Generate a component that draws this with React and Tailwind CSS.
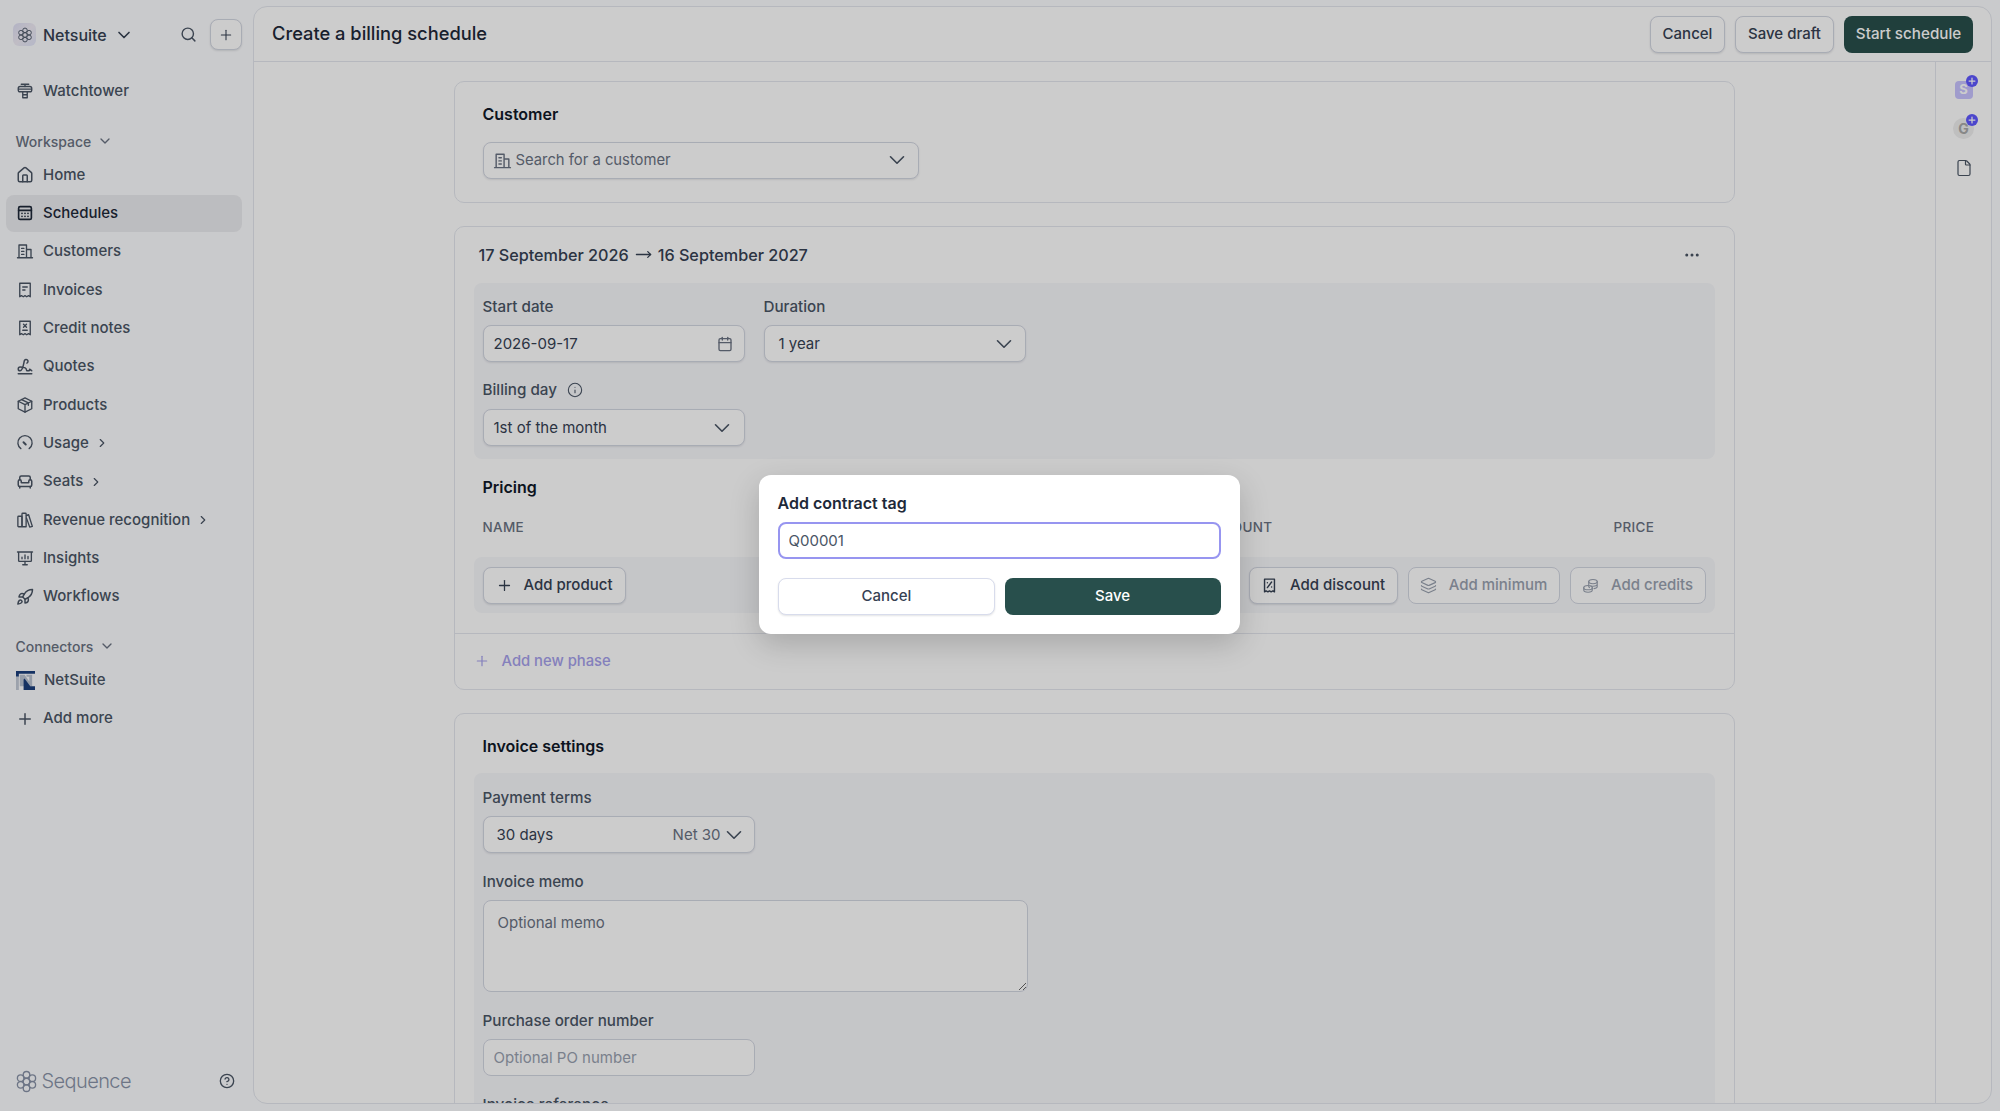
import {
  Armchair, Calendar, ChevronDown, ChevronRight, CircleHelp, Ellipsis, File, Info, Layers,
  MoveRight, Plus, Rocket, Search, Signature, House,
} from 'lucide-react'

const Svg = ({ className = 'size-[18px]', sw = 1.8, children }) => (
  <svg viewBox="0 0 24 24" fill="none" stroke="currentColor" strokeWidth={sw} strokeLinecap="round" strokeLinejoin="round" className={className}>
    {children}
  </svg>
)

const WatchtowerIcon = (p) => (
  <Svg {...p}>
    <path d="M7 3h10M12 3v3" />
    <rect x="3" y="6" width="18" height="7" rx="2.5" />
    <path d="M3.5 9.5h17" />
    <path d="M9 13v8h6v-8M9 17h6" />
  </Svg>
)
const ScheduleIcon = (p) => (
  <Svg sw={2.2} {...p}>
    <rect x="3.5" y="3.5" width="17" height="17" rx="2" />
    <path d="M3.5 8.5h17" />
    <path d="M8 12.5h.01M12 12.5h.01M16 12.5h.01M8 16.5h.01M12 16.5h.01M16 16.5h.01" />
  </Svg>
)
const BuildingIcon = (p) => (
  <Svg {...p}>
    <path d="M2 21h20M4 21V4h10v17M14 10h6v11" />
    <path d="M7.5 8.5h3M7.5 12.5h3M7.5 16.5h3" />
  </Svg>
)
const InvoiceIcon = (p) => (
  <Svg {...p}>
    <path d="M5 3h14v18l-2.3-1.4L14.3 21 12 19.6 9.7 21l-2.4-1.4L5 21z" />
    <path d="M9 8h6M9 12h3" />
  </Svg>
)
const CreditIcon = (p) => (
  <Svg {...p}>
    <path d="M5 3h14v18l-2.3-1.4L14.3 21 12 19.6 9.7 21l-2.4-1.4L5 21z" />
    <path d="m10 7 4 4M14 7l-4 4M9 15h6" />
  </Svg>
)
const DiscountIcon = (p) => (
  <Svg sw={2} {...p}>
    <path d="M5 3h14v18l-2.3-1.4L14.3 21 12 19.6 9.7 21l-2.4-1.4L5 21z" />
    <path d="m15 7-6 8M9 8h.01M15 14h.01" />
  </Svg>
)
const BoxIcon = (p) => (
  <Svg {...p}>
    <path d="M12 2.5 21 7v10l-9 4.5L3 17V7z" />
    <path d="m3 7 9 4.5L21 7M12 11.5v10M7.5 4.7l9 4.6v3" />
  </Svg>
)
const GaugeIcon = (p) => (
  <Svg {...p}>
    <path d="M6.5 19.5a9.5 9.5 0 1 1 11 0" />
    <path d="m10 11 3 3" strokeWidth={2.6} />
  </Svg>
)
const LibraryIcon = (p) => (
  <Svg {...p}>
    <rect x="2.5" y="7" width="5.5" height="14" rx="1" />
    <path d="M8 21V4a1 1 0 0 1 1-1h3.5a1 1 0 0 1 1 1v17z" />
    <path d="m14 6 2.8-1 5 15.5-3.5 1-4.3-12" />
  </Svg>
)
const InsightIcon = (p) => (
  <Svg {...p}>
    <path d="M2 4h20M3.5 4v11.5a1 1 0 0 0 1 1h15a1 1 0 0 0 1-1V4" />
    <path d="M8 13v-2M12 13V8M16 13v-3M12 16.5V20M9 21h6" />
  </Svg>
)
const CoinsIcon = (p) => (
  <Svg {...p}>
    <ellipse cx="15.5" cy="6.5" rx="6" ry="3" />
    <path d="M9.5 6.5v7c0 .6.5 1 1 1.4M21.5 6.5v7c0 1.3-1.9 2.5-4.5 2.9M21.5 10c0 1.7-2.7 3-6 3-1 0-2-.1-3-.4" />
    <ellipse cx="8.5" cy="15" rx="6" ry="3" />
    <path d="M2.5 15v3.5c0 1.7 2.7 3 6 3s6-1.3 6-3V15" />
  </Svg>
)
const Flower = ({ className }) => (
  <svg viewBox="0 0 24 24" fill="none" stroke="currentColor" strokeWidth="1.4" className={className}>
    <circle cx="12" cy="12" r="3.4" />
    <circle cx="12" cy="5" r="3.4" />
    <circle cx="12" cy="19" r="3.4" />
    <circle cx="5.9" cy="8.5" r="3.4" />
    <circle cx="18.1" cy="8.5" r="3.4" />
    <circle cx="5.9" cy="15.5" r="3.4" />
    <circle cx="18.1" cy="15.5" r="3.4" />
  </svg>
)
const NetSuiteLogo = () => (
  <svg viewBox="0 0 20 20" className="size-[19px]">
    <path d="M0 0h20v3H3v3H0z" fill="#1b3f7c" />
    <path d="M0 6h3v14H0z" fill="#c3cbd8" />
    <path d="M4 4h5l5 7V6h-3V4h6v12h-4L9 9v7H4z" fill="#b9c3d2" />
    <path d="M9 8l6 8h5v4H8V9z" fill="#1b3f7c" />
  </svg>
)

const NavItem = ({ icon: Icon, label, active, arrow }) => (
  <div className={`flex items-center h-[37px] rounded-[8px] pl-[9.5px] gap-[9.5px] text-[15px] font-medium ${active ? 'bg-[#ecedf1] text-gray-800' : 'text-gray-600'}`}>
    <Icon className="size-[18px] shrink-0" />
    <span>{label}</span>
    {arrow && <ChevronRight className="size-[14px] -ml-[3.5px]" strokeWidth={2} />}
  </div>
)

const Btn = ({ children, className = '', disabled }) => (
  <button className={`flex items-center justify-center h-[37px] rounded-[8px] border border-[#d3d7e2] bg-white text-[15px] font-medium ${disabled ? 'text-gray-400' : 'text-gray-700 shadow-[0_1px_2px_rgba(16,24,40,0.12)]'} ${className}`}>
    {children}
  </button>
)

const Select = ({ className = 'text-gray-700', children }) => (
  <div className={`flex items-center h-[37px] rounded-[8px] border border-[#d3d7e2] bg-white shadow-[0_1px_2px_rgba(16,24,40,0.1)] text-[15px] ${className}`}>
    {children}
  </div>
)

const SelectChevron = () => <ChevronDown className="size-[26px] ml-auto text-gray-600" strokeWidth={1.5} />

const Label = ({ children }) => <div className="h-[20px] leading-[20px] text-[15.2px] font-medium text-gray-600">{children}</div>

const Card = ({ children }) => <section className="rounded-[10px] border border-[#e4e7ee] bg-white shrink-0">{children}</section>

export default function App() {
  return (
    <div className="relative flex h-[1111px] overflow-hidden bg-[#fcfdff] [font-family:Inter,sans-serif]">
      {/* Sidebar */}
      <aside className="flex flex-col w-[253px] shrink-0 h-full pb-[15px]">
        <div className="flex items-center h-[31px] mt-[19px] pl-[13px] pr-[11px]">
          <div className="flex items-center justify-center size-[23px] rounded-[6px] bg-gradient-to-br from-[#dfe0f6] via-[#f0ecf6] to-[#e2e6fa] text-gray-600">
            <Flower className="size-[16px]" />
          </div>
          <span className="ml-[7px] text-[16px] font-medium text-gray-700">Netsuite</span>
          <ChevronDown className="size-[20px] ml-[7px] text-gray-700" />
          <Search className="size-[17px] ml-auto mr-[13px] text-gray-600" />
          <Btn className="!h-[31px] w-[32px]"><Plus className="size-[16px]" strokeWidth={1.6} /></Btn>
        </div>

        <div className="mx-[6px] mt-[22.5px] w-[236px]">
          <NavItem icon={WatchtowerIcon} label="Watchtower" />
        </div>

        <div className="flex items-center h-[20px] mt-[21.5px] pl-[15.5px] gap-[6px] text-[14px] font-medium text-gray-500">
          Workspace <ChevronDown className="size-[16px]" strokeWidth={2} />
        </div>
        <nav className="flex flex-col gap-[1.35px] mx-[6px] mt-[5.3px] w-[236px]">
          <NavItem icon={House} label="Home" />
          <NavItem icon={ScheduleIcon} label="Schedules" active />
          <NavItem icon={BuildingIcon} label="Customers" />
          <NavItem icon={InvoiceIcon} label="Invoices" />
          <NavItem icon={CreditIcon} label="Credit notes" />
          <NavItem icon={Signature} label="Quotes" />
          <NavItem icon={BoxIcon} label="Products" />
          <NavItem icon={GaugeIcon} label="Usage" arrow />
          <NavItem icon={Armchair} label="Seats" arrow />
          <NavItem icon={LibraryIcon} label="Revenue recognition" arrow />
          <NavItem icon={InsightIcon} label="Insights" />
          <NavItem icon={Rocket} label="Workflows" />
        </nav>

        <div className="flex items-center h-[20px] mt-[21px] pl-[15.5px] gap-[6px] text-[14px] font-medium text-gray-500">
          Connectors <ChevronDown className="size-[16px]" strokeWidth={2} />
        </div>
        <div className="flex flex-col gap-[1.35px] mx-[6px] mt-[5.8px] w-[236px]">
          <NavItem icon={NetSuiteLogo} label="NetSuite" />
          <NavItem icon={Plus} label="Add more" />
        </div>

        <div className="flex items-center mt-auto pl-[15px] pr-[18px]">
          <Flower className="size-[23px] text-[#8993a8]" />
          <span className="ml-[3.5px] text-[20px] font-light tracking-[-0.6px] text-[#8993a8]">Sequence</span>
          <CircleHelp className="size-[16px] ml-auto text-gray-600" />
        </div>
      </aside>

      {/* Main panel */}
      <main className="flex flex-col flex-1 min-w-0 mt-[6px] mb-[7px] mr-[8px] rounded-[14px] border border-[#e4e7ee] bg-white overflow-hidden">
        <header className="flex items-center shrink-0 h-[55px] pl-[18px] pr-[18px] gap-[10px] border-b border-[#e4e7ee]">
          <h1 className="mr-auto text-[18.3px] font-medium text-gray-800">Create a billing schedule</h1>
          <Btn className="w-[75px]">Cancel</Btn>
          <Btn className="w-[99px]">Save draft</Btn>
          <button className="h-[37px] w-[129px] rounded-[8px] bg-[#284f4c] text-[15.2px] font-medium text-white">Start schedule</button>
        </header>

        <div className="flex flex-1 min-h-0">
          <div className="flex-1 min-w-0 overflow-hidden pr-[1px]">
            <div className="flex flex-col gap-[23.5px] w-[1281px] mx-auto pt-[18.5px]">
              <Card>
                <div className="pt-[20px] pl-[28px] pb-[23px]">
                  <h2 className="h-[24px] leading-[24px] text-[16px] font-semibold text-gray-900">Customer</h2>
                  <Select className="w-[436px] mt-[16px] pl-[9px] pr-[8px] text-gray-500">
                    <BuildingIcon className="size-[19px]" />
                    <span className="ml-[4px] text-[14.8px]">Search for a customer</span>
                    <SelectChevron />
                  </Select>
                </div>
              </Card>

              <Card>
                <div className="flex items-center justify-between h-[56px] pl-[24px] pr-[33px]">
                  <div className="flex items-center gap-[6px] text-[16.2px] font-medium text-gray-700">
                    17 September 2026 <MoveRight className="size-[17px]" strokeWidth={1.8} /> 16 September 2027
                  </div>
                  <Ellipsis className="size-[18px] text-gray-600" />
                </div>

                <div className="mx-[19px] rounded-[8px] bg-[#f7f8fb] pl-[9px] pt-[14.3px] pb-[12.7px]">
                  <div className="flex gap-[19px]">
                    <div className="w-[262px]">
                      <Label>Start date</Label>
                      <Select className="mt-[8px] pl-[10px] pr-[11px] text-gray-700">
                        2026-09-17
                        <Calendar className="size-[16px] ml-auto text-gray-500" />
                      </Select>
                    </div>
                    <div className="w-[262px]">
                      <Label>Duration</Label>
                      <Select className="mt-[8px] pl-[14px] pr-[8px] text-gray-700">
                        1 year
                        <SelectChevron />
                      </Select>
                    </div>
                  </div>
                  <div className="mt-[18px] w-[262px]">
                    <div className="flex items-center gap-[10px]">
                      <Label>Billing day</Label>
                      <Info className="size-[16px] text-gray-600" strokeWidth={1.6} />
                    </div>
                    <Select className="mt-[9px] pl-[10px] pr-[9px] text-gray-700">
                      1st of the month
                      <SelectChevron />
                    </Select>
                  </div>
                </div>

                <h3 className="h-[24px] leading-[24px] mt-[16.3px] pl-[28px] text-[16px] font-semibold text-gray-900">Pricing</h3>
                <div className="flex mt-[19px] pl-[28px] h-[18px] leading-[18px] text-[13.5px] font-medium tracking-[0.3px] text-gray-500">
                  <span className="w-[716px]">NAME</span>
                  <span className="w-[415px]">DISCOUNT</span>
                  <span>PRICE</span>
                </div>
                <div className="flex items-center justify-between h-[56px] mt-[21px] mb-[19.5px] mx-[19px] rounded-[8px] bg-[#f7f8fb] pl-[9px] pr-[9px]">
                  <Btn className="w-[143px] gap-[11px]"><Plus className="size-[17px]" strokeWidth={1.8} />Add product</Btn>
                  <div className="flex gap-[10px]">
                    <Btn className="w-[149px] gap-[12px]"><DiscountIcon className="size-[17px]" />Add discount</Btn>
                    <Btn disabled className="w-[152px] gap-[12px]"><Layers className="size-[17px]" strokeWidth={1.6} />Add minimum</Btn>
                    <Btn disabled className="w-[136px] gap-[12px]"><CoinsIcon className="size-[17px]" sw={1.6} />Add credits</Btn>
                  </div>
                </div>
                <div className="flex items-center h-[56px] pl-[19px] gap-[12px] border-t border-[#e4e7ee] text-[14.8px] font-medium text-[#a5a0ec]">
                  <Plus className="size-[16px]" strokeWidth={1.8} /> Add new phase
                </div>
              </Card>

              <Card>
                <h2 className="h-[24px] leading-[24px] mt-[19.5px] pl-[28px] text-[16px] font-semibold text-gray-900">Invoice settings</h2>
                <div className="mx-[19px] mt-[15.5px] rounded-[8px] bg-[#f7f8fb] pl-[9px] pt-[15px] pb-[20px]">
                  <Label>Payment terms</Label>
                  <Select className="w-[272px] mt-[8px] pl-[13px] pr-[7px] text-gray-700">
                    30 days
                    <span className="ml-auto text-gray-500">Net 30</span>
                    <ChevronDown className="size-[26px] text-gray-600" strokeWidth={1.5} />
                  </Select>
                  <div className="mt-[19px]"><Label>Invoice memo</Label></div>
                  <textarea
                    readOnly
                    placeholder="Optional memo"
                    className="block w-[545px] h-[92px] mt-[8px] rounded-[8px] border border-[#d3d7e2] bg-white px-[14px] py-[11px] text-[15px] outline-none placeholder:text-gray-500"
                  />
                  <div className="mt-[19px]"><Label>Purchase order number</Label></div>
                  <input
                    readOnly
                    placeholder="Optional PO number"
                    className="block w-[272px] h-[37px] mt-[8px] rounded-[8px] border border-[#d3d7e2] bg-white px-[10px] text-[15px] outline-none placeholder:text-gray-400"
                  />
                  <div className="mt-[19px]"><Label>Invoice reference</Label></div>
                </div>
              </Card>
            </div>
          </div>

          <aside className="flex flex-col items-center shrink-0 w-[56px] pt-[18.5px] gap-[19px] border-l border-[#e4e7ee]">
            <div className="relative flex items-center justify-center size-[18px] rounded-[4px] bg-[#c8c3ff] text-[13px] font-bold text-white">
              S
              <span className="absolute -top-[5.5px] -right-[5.5px] flex items-center justify-center size-[12px] rounded-full bg-[#5f58ff]"><Plus className="size-[10px] text-white" strokeWidth={3} /></span>
            </div>
            <div className="relative flex items-center justify-center size-[21px] rounded-full bg-[#efefef] text-[14px] font-bold text-[#aaaaaa]">
              G
              <span className="absolute -top-[4px] -right-[4px] flex items-center justify-center size-[12px] rounded-full bg-[#5f58ff]"><Plus className="size-[10px] text-white" strokeWidth={3} /></span>
            </div>
            <File className="size-[18px] mt-[1px] text-gray-600" strokeWidth={1.6} />
          </aside>
        </div>
      </main>

      {/* Modal over a dimmed page */}
      <div className="absolute inset-0 flex items-center justify-center pr-[2px] pb-[2px] bg-black/20">
        <div className="w-[481px] rounded-[12px] bg-white p-[19px] shadow-[0_10px_30px_rgba(0,0,0,0.18)]">
          <h2 className="h-[18px] leading-[18px] text-[16px] font-semibold text-gray-800">Add contract tag</h2>
          <input
            readOnly
            value="Q00001"
            className="block w-full h-[37px] mt-[10px] rounded-[8px] border-2 border-[#9795f0] bg-white px-[9px] text-[15px] text-gray-600 outline-none"
          />
          <div className="flex gap-[9.5px] mt-[19px]">
            <Btn className="flex-1 !border-[#d8dcec]">Cancel</Btn>
            <button className="flex-1 h-[37px] rounded-[8px] bg-[#284f4c] text-[15px] font-medium text-white">Save</button>
          </div>
        </div>
      </div>
    </div>
  )
}
